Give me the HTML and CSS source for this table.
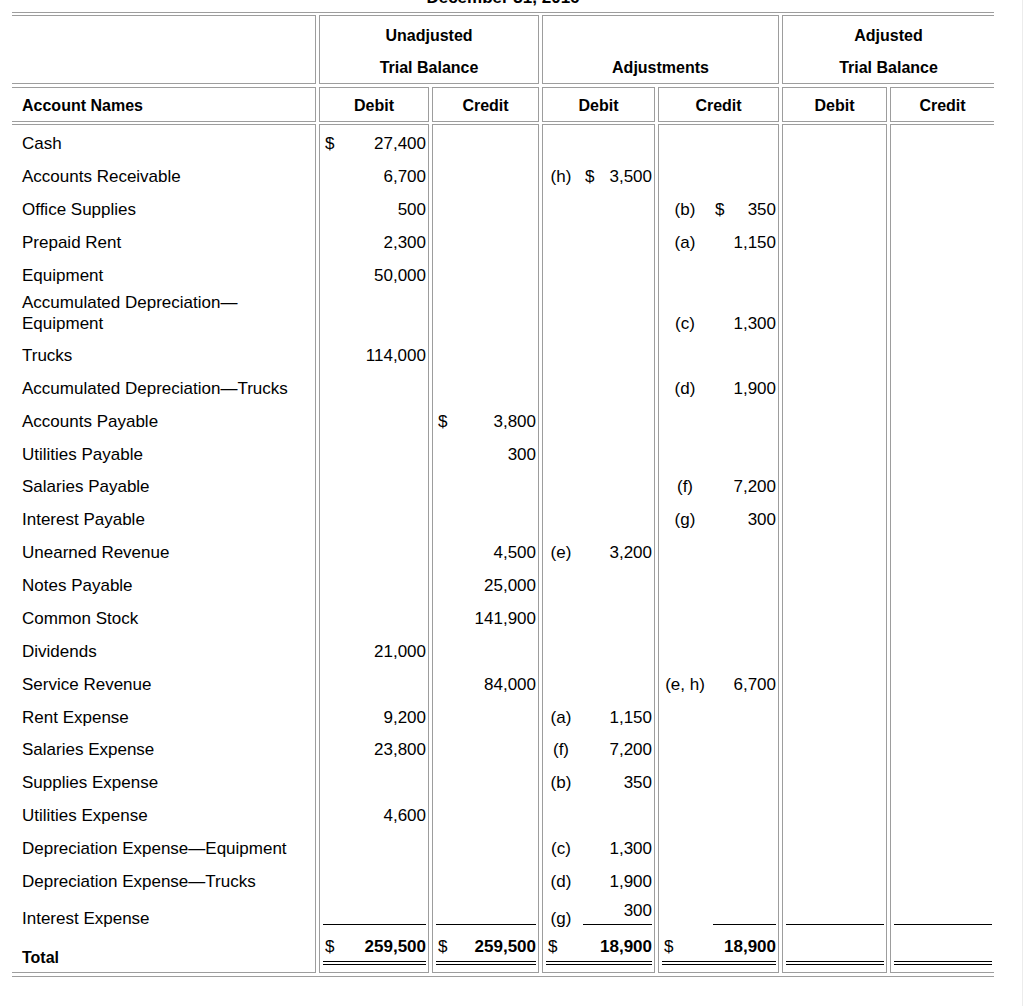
FILE: index.html
```html
<!DOCTYPE html>
<html lang="en">
<head>
<meta charset="utf-8">
<title>Adjusted Trial Balance Worksheet</title>
<link rel="stylesheet" href="styles.css">
</head>
<body>
<div class="page">
  <div class="title">December 31, 2016</div>
  <div class="sheet">
    <table class="tb">
      <colgroup>
        <col class="w0"><col class="w1"><col class="w2"><col class="w3"><col class="w4"><col class="w5"><col class="w6">
      </colgroup>
      <tr class="gap2"><td colspan="7"></td></tr>
      <tr class="h1">
        <th class="name"></th>
        <th colspan="2"><div class="hl">Unadjusted</div><div class="hl">Trial Balance</div></th>
        <th colspan="2"><div class="hl">&nbsp;</div><div class="hl">Adjustments</div></th>
        <th colspan="2" class="last"><div class="hl">Adjusted</div><div class="hl">Trial Balance</div></th>
      </tr>
      <tr class="gap3"><td colspan="7"></td></tr>
      <tr class="h2">
        <th class="name">Account Names</th>
        <th>Debit</th><th>Credit</th><th>Debit</th><th>Credit</th><th>Debit</th><th class="last">Credit</th>
      </tr>
      <tr class="gap2"><td colspan="7"></td></tr>

      <tr class="first">
        <td class="name">Cash</td>
        <td class="amt"><div class="cell"><div class="money"><span class="cur">$</span><span class="num">27,400</span></div></div></td>
        <td class="amt"></td><td class="amt c3"></td><td class="amt c4"></td><td class="amt"></td><td class="amt last"></td>
      </tr>
      <tr>
        <td class="name">Accounts Receivable</td>
        <td class="amt"><div class="cell"><div class="money"><span class="num">6,700</span></div></div></td>
        <td class="amt"></td>
        <td class="amt c3"><div class="cell"><span class="ref">(h)</span><div class="money"><span class="cur">$</span><span class="num">3,500</span></div></div></td>
        <td class="amt c4"></td><td class="amt"></td><td class="amt last"></td>
      </tr>
      <tr>
        <td class="name">Office Supplies</td>
        <td class="amt"><div class="cell"><div class="money"><span class="num">500</span></div></div></td>
        <td class="amt"></td><td class="amt c3"></td>
        <td class="amt c4"><div class="cell"><span class="ref">(b)</span><div class="money"><span class="cur">$</span><span class="num">350</span></div></div></td>
        <td class="amt"></td><td class="amt last"></td>
      </tr>
      <tr>
        <td class="name">Prepaid Rent</td>
        <td class="amt"><div class="cell"><div class="money"><span class="num">2,300</span></div></div></td>
        <td class="amt"></td><td class="amt c3"></td>
        <td class="amt c4"><div class="cell"><span class="ref">(a)</span><div class="money"><span class="num">1,150</span></div></div></td>
        <td class="amt"></td><td class="amt last"></td>
      </tr>
      <tr>
        <td class="name">Equipment</td>
        <td class="amt"><div class="cell"><div class="money"><span class="num">50,000</span></div></div></td>
        <td class="amt"></td><td class="amt c3"></td><td class="amt c4"></td><td class="amt"></td><td class="amt last"></td>
      </tr>
      <tr class="tall">
        <td class="name">Accumulated Depreciation—<br>Equipment</td>
        <td class="amt"></td><td class="amt"></td><td class="amt c3"></td>
        <td class="amt c4"><div class="cell"><span class="ref">(c)</span><div class="money"><span class="num">1,300</span></div></div></td>
        <td class="amt"></td><td class="amt last"></td>
      </tr>
      <tr>
        <td class="name">Trucks</td>
        <td class="amt"><div class="cell"><div class="money"><span class="num">114,000</span></div></div></td>
        <td class="amt"></td><td class="amt c3"></td><td class="amt c4"></td><td class="amt"></td><td class="amt last"></td>
      </tr>
      <tr>
        <td class="name">Accumulated Depreciation—Trucks</td>
        <td class="amt"></td><td class="amt"></td><td class="amt c3"></td>
        <td class="amt c4"><div class="cell"><span class="ref">(d)</span><div class="money"><span class="num">1,900</span></div></div></td>
        <td class="amt"></td><td class="amt last"></td>
      </tr>
      <tr>
        <td class="name">Accounts Payable</td>
        <td class="amt"></td>
        <td class="amt"><div class="cell"><div class="money"><span class="cur">$</span><span class="num">3,800</span></div></div></td>
        <td class="amt c3"></td><td class="amt c4"></td><td class="amt"></td><td class="amt last"></td>
      </tr>
      <tr>
        <td class="name">Utilities Payable</td>
        <td class="amt"></td>
        <td class="amt"><div class="cell"><div class="money"><span class="num">300</span></div></div></td>
        <td class="amt c3"></td><td class="amt c4"></td><td class="amt"></td><td class="amt last"></td>
      </tr>
      <tr>
        <td class="name">Salaries Payable</td>
        <td class="amt"></td><td class="amt"></td><td class="amt c3"></td>
        <td class="amt c4"><div class="cell"><span class="ref">(f)</span><div class="money"><span class="num">7,200</span></div></div></td>
        <td class="amt"></td><td class="amt last"></td>
      </tr>
      <tr>
        <td class="name">Interest Payable</td>
        <td class="amt"></td><td class="amt"></td><td class="amt c3"></td>
        <td class="amt c4"><div class="cell"><span class="ref">(g)</span><div class="money"><span class="num">300</span></div></div></td>
        <td class="amt"></td><td class="amt last"></td>
      </tr>
      <tr>
        <td class="name">Unearned Revenue</td>
        <td class="amt"></td>
        <td class="amt"><div class="cell"><div class="money"><span class="num">4,500</span></div></div></td>
        <td class="amt c3"><div class="cell"><span class="ref">(e)</span><div class="money"><span class="num">3,200</span></div></div></td>
        <td class="amt c4"></td><td class="amt"></td><td class="amt last"></td>
      </tr>
      <tr>
        <td class="name">Notes Payable</td>
        <td class="amt"></td>
        <td class="amt"><div class="cell"><div class="money"><span class="num">25,000</span></div></div></td>
        <td class="amt c3"></td><td class="amt c4"></td><td class="amt"></td><td class="amt last"></td>
      </tr>
      <tr>
        <td class="name">Common Stock</td>
        <td class="amt"></td>
        <td class="amt"><div class="cell"><div class="money"><span class="num">141,900</span></div></div></td>
        <td class="amt c3"></td><td class="amt c4"></td><td class="amt"></td><td class="amt last"></td>
      </tr>
      <tr>
        <td class="name">Dividends</td>
        <td class="amt"><div class="cell"><div class="money"><span class="num">21,000</span></div></div></td>
        <td class="amt"></td><td class="amt c3"></td><td class="amt c4"></td><td class="amt"></td><td class="amt last"></td>
      </tr>
      <tr>
        <td class="name">Service Revenue</td>
        <td class="amt"></td>
        <td class="amt"><div class="cell"><div class="money"><span class="num">84,000</span></div></div></td>
        <td class="amt c3"></td>
        <td class="amt c4"><div class="cell"><span class="ref">(e, h)</span><div class="money"><span class="num">6,700</span></div></div></td>
        <td class="amt"></td><td class="amt last"></td>
      </tr>
      <tr>
        <td class="name">Rent Expense</td>
        <td class="amt"><div class="cell"><div class="money"><span class="num">9,200</span></div></div></td>
        <td class="amt"></td>
        <td class="amt c3"><div class="cell"><span class="ref">(a)</span><div class="money"><span class="num">1,150</span></div></div></td>
        <td class="amt c4"></td><td class="amt"></td><td class="amt last"></td>
      </tr>
      <tr>
        <td class="name">Salaries Expense</td>
        <td class="amt"><div class="cell"><div class="money"><span class="num">23,800</span></div></div></td>
        <td class="amt"></td>
        <td class="amt c3"><div class="cell"><span class="ref">(f)</span><div class="money"><span class="num">7,200</span></div></div></td>
        <td class="amt c4"></td><td class="amt"></td><td class="amt last"></td>
      </tr>
      <tr>
        <td class="name">Supplies Expense</td>
        <td class="amt"></td><td class="amt"></td>
        <td class="amt c3"><div class="cell"><span class="ref">(b)</span><div class="money"><span class="num">350</span></div></div></td>
        <td class="amt c4"></td><td class="amt"></td><td class="amt last"></td>
      </tr>
      <tr>
        <td class="name">Utilities Expense</td>
        <td class="amt"><div class="cell"><div class="money"><span class="num">4,600</span></div></div></td>
        <td class="amt"></td><td class="amt c3"></td><td class="amt c4"></td><td class="amt"></td><td class="amt last"></td>
      </tr>
      <tr>
        <td class="name">Depreciation Expense—Equipment</td>
        <td class="amt"></td><td class="amt"></td>
        <td class="amt c3"><div class="cell"><span class="ref">(c)</span><div class="money"><span class="num">1,300</span></div></div></td>
        <td class="amt c4"></td><td class="amt"></td><td class="amt last"></td>
      </tr>
      <tr>
        <td class="name">Depreciation Expense—Trucks</td>
        <td class="amt"></td><td class="amt"></td>
        <td class="amt c3"><div class="cell"><span class="ref">(d)</span><div class="money"><span class="num">1,900</span></div></div></td>
        <td class="amt c4"></td><td class="amt"></td><td class="amt last"></td>
      </tr>
      <tr class="int">
        <td class="name">Interest Expense</td>
        <td class="amt"><div class="cell"><div class="money u"><span class="num">&nbsp;</span></div></div></td>
        <td class="amt"><div class="cell"><div class="money u"><span class="num">&nbsp;</span></div></div></td>
        <td class="amt c3"><div class="cell"><span class="ref low">(g)</span><div class="money u"><span class="num">300</span></div></div></td>
        <td class="amt c4"><div class="cell"><span class="ref"></span><div class="money u"><span class="num">&nbsp;</span></div></div></td>
        <td class="amt"><div class="cell"><div class="money u"><span class="num">&nbsp;</span></div></div></td>
        <td class="amt last"><div class="cell"><div class="money u"><span class="num">&nbsp;</span></div></div></td>
      </tr>
      <tr class="total">
        <td class="name">Total</td>
        <td class="amt"><div class="cell"><div class="money uu"><span class="cur">$</span><span class="num">259,500</span></div></div></td>
        <td class="amt"><div class="cell"><div class="money uu"><span class="cur">$</span><span class="num">259,500</span></div></div></td>
        <td class="amt c3"><div class="cell"><div class="money uu"><span class="cur">$</span><span class="num">18,900</span></div></div></td>
        <td class="amt c4"><div class="cell"><div class="money uu"><span class="cur">$</span><span class="num">18,900</span></div></div></td>
        <td class="amt"><div class="cell"><div class="money uu"><span class="num">&nbsp;</span></div></div></td>
        <td class="amt last"><div class="cell"><div class="money uu"><span class="num">&nbsp;</span></div></div></td>
      </tr>
      <tr class="gap3"><td colspan="7"></td></tr>
    </table>
  </div>
</div>
</body>
</html>
```
FILE: styles.css
```css
* { box-sizing: border-box; }

html, body {
  margin: 0;
  padding: 0;
  background: #fff;
}

body {
  font-family: "Liberation Sans", Arial, Helvetica, sans-serif;
  color: #000;
  overflow: hidden;
}

body::after {
  content: "";
  position: fixed;
  top: 0;
  bottom: 0;
  left: 1022px;
  width: 1px;
  background: #ececec;
}

.page {
  padding-left: 12px;
}

.title {
  width: 982px;
  margin: -12px 0 4px;
  text-align: center;
  font-weight: bold;
  font-size: 17px;
  line-height: 20px;
}

.sheet {
  width: 982px;
  border-top: 1px solid #9d9d9d;
  border-bottom: 1px solid #9d9d9d;
}

.tb {
  table-layout: fixed;
  width: 988px;
  margin: 0 -3px;
  border-collapse: separate;
  border-spacing: 3px 0;
  font-size: 17px;
}

.w0 { width: 304px; }
.w1 { width: 110px; }
.w2 { width: 107px; }
.w3 { width: 113px; }
.w4 { width: 121px; }
.w5 { width: 105px; }
.w6 { width: 104px; }

/* spacer rows */
.gap2 td, .gap3 td {
  padding: 0;
  border: 0;
  font-size: 0;
  line-height: 0;
}
.gap2 td { height: 2px; }
.gap3 td { height: 3px; }

/* header */
th {
  font-size: 16px;
  font-weight: bold;
  text-align: center;
  border: 1px solid #9d9d9d;
  padding: 0;
}
th.name {
  border-left: 0;
  text-align: left;
  padding-left: 10px;
}
th.last { border-right: 0; }

.h1 th { padding-top: 10px; padding-bottom: 5px; }
.hl { line-height: 20px; }
.hl + .hl { margin-top: 12px; }

.h2 th {
  padding-top: 9px;
  padding-bottom: 6px;
  line-height: 18px;
}

/* body */
td {
  padding: 7.45px 2px 7.45px 3px;
  line-height: 18px;
  vertical-align: middle;
}
td.name {
  padding-left: 10px;
  white-space: nowrap;
  border-right: 1px solid #9d9d9d;
}
td.amt {
  border-left: 1px solid #9d9d9d;
  border-right: 1px solid #9d9d9d;
}
td.amt.last { border-right: 0; }

tr.first td {
  border-top: 1px solid #9d9d9d;
  padding-top: 10px;
}

tr.tall td.name {
  vertical-align: top;
  padding-top: 0;
  padding-bottom: 5.5px;
  line-height: 21px;
}
tr.tall td.amt {
  vertical-align: bottom;
  padding-bottom: 6.5px;
}

.cell {
  display: flex;
  align-items: flex-end;
}
.ref {
  flex: none;
  text-align: center;
  white-space: nowrap;
}
.c3 .ref { width: 30px; margin-right: 7px; }
.c4 .ref { width: 46px; margin-right: 5px; }

.money {
  flex: 1;
  display: flex;
  min-width: 0;
}
.cur {
  margin-left: 2px;
  font-weight: normal;
}
.num {
  margin-left: auto;
  white-space: nowrap;
}

/* interest row with single rule */
tr.int { height: 33.15px; }
tr.int td {
  vertical-align: bottom;
  padding-top: 0;
  padding-bottom: 6px;
}
tr.int td.name { padding-bottom: 3px; }
.money.u {
  border-bottom: 1px solid #000;
  padding-bottom: 4px;
}
.ref.low { margin-bottom: -3px; }

/* total row with double rule */
tr.total td {
  vertical-align: bottom;
  padding-top: 7px;
  padding-bottom: 7px;
  border-bottom: 1px solid #9d9d9d;
  font-weight: bold;
}
tr.total td.name {
  font-size: 16px;
  padding-bottom: 5px;
}
.money.uu {
  border-bottom: 4px double #000;
  padding-bottom: 5px;
}
```
